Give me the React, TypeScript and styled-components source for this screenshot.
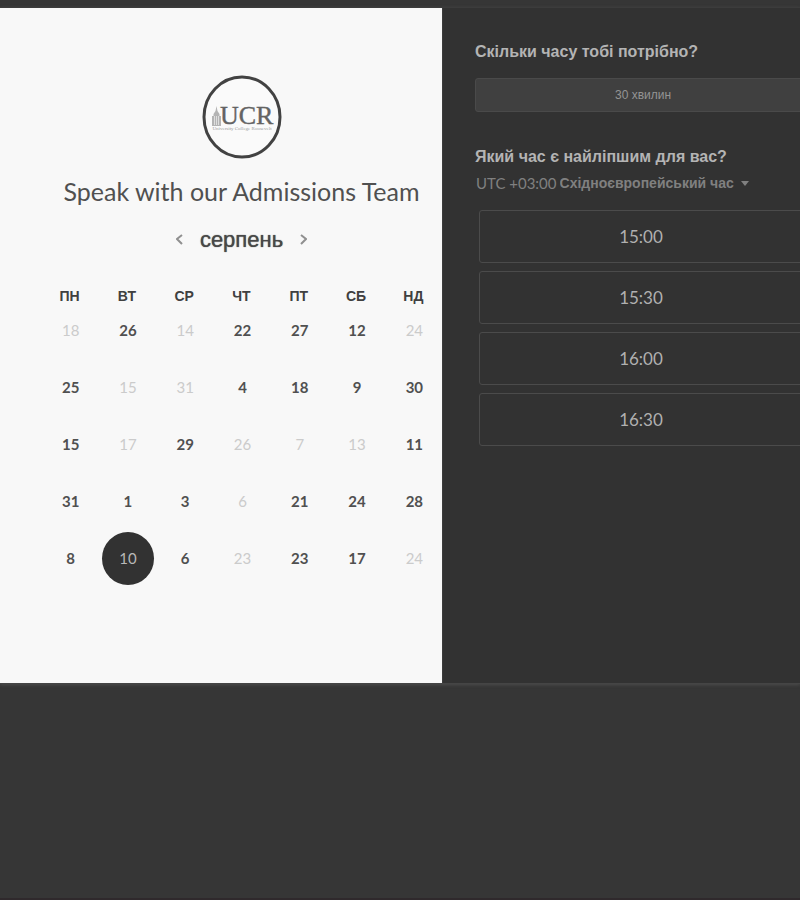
import React, { useState } from "react";
import styled, { createGlobalStyle } from "styled-components";

const latin = `Lato, "Open Sans", sans-serif`;
const cyrillic = `"Liberation Sans", Arial, sans-serif`;

const GlobalStyle = createGlobalStyle`
  *, *::before, *::after { box-sizing: border-box; }
  body { margin: 0; background: #363636; font-family: ${cyrillic}; }
  button, select { font: inherit; color: inherit; margin: 0; padding: 0; border: 0; background: none; cursor: pointer; }
  h1, h2, p { margin: 0; }
`;

const Page = styled.div`
  display: flex;
  flex-direction: column;
  min-height: 100vh;
  padding-top: 7px;
  overflow: hidden;
  background: #363636;
  border-bottom: 2px solid #2f292c;
`;

const Scheduler = styled.main`
  display: flex;
  min-height: 677px;
  border-top: 1px solid #3c3c3c;
  border-bottom: 1px solid #454545;
  box-shadow: 0 1px 3px #4c4c4c;
`;

const CalendarPanel = styled.section`
  flex: 0 0 55.25%;
  display: flex;
  flex-direction: column;
  align-items: center;
  padding: 67px 0 40px 41px;
  background: #f8f8f8;
  color: #444;
`;

const Logo = styled.svg`
  display: block;
  width: 80px;
  height: 84px;
`;

const Title = styled.h1`
  margin-top: 16px;
  font: 400 25px/32px ${latin};
  color: #505050;
  white-space: nowrap;
`;

const MonthBar = styled.div`
  display: flex;
  align-items: center;
  gap: 14px;
  margin-top: 17px;
`;

const Month = styled.h2`
  font: 400 22px/32px ${cyrillic};
  color: #484848;
  text-shadow: 0 0 1px #484848;
`;

const ArrowButton = styled.button`
  display: flex;
  align-items: center;
  justify-content: center;
  width: 12px;
  height: 24px;
  color: #909090;
`;

const Calendar = styled.table`
  width: 100%;
  margin-top: 34px;
  table-layout: fixed;
  border-collapse: collapse;
`;

const Weekday = styled.th`
  height: 12px;
  padding: 0;
  font: 700 14px/12px ${cyrillic};
  color: #404040;
`;

const DayCell = styled.td`
  height: 57px;
  padding: 0 0 0 2px;
  text-align: center;
`;

const DayButton = styled.button<{ $selected: boolean }>`
  width: 52px;
  height: 53px;
  border-radius: 50%;
  font: ${(p) => (p.$selected ? 400 : 700)} 15px/53px ${latin};
  color: ${(p) => (p.$selected ? "#b8b8b8" : "#505050")};
  background: ${(p) => (p.$selected ? "#323232" : "transparent")};

  &:disabled {
    font-weight: 400;
    color: #cbcbcb;
    cursor: default;
  }
`;

const TimePanel = styled.section`
  flex: 1;
  min-width: 0;
  padding: 33px 0 40px 32px;
  border-left: 1px solid #3c3c3c;
  background: #323232;
  color: #b8b8b8;
`;

const Question = styled.h2`
  font: 700 16px/22px ${cyrillic};
  color: #b4b4b4;
`;

const DurationButton = styled.button`
  display: block;
  width: calc(100% + 11px);
  height: 34px;
  margin: 15px 0 34px;
  border: 1px solid #4a4a4a;
  border-radius: 3px;
  background: #404040;
  color: #949494;
  font: 400 12px/16px ${cyrillic};
`;

const Zone = styled.label`
  display: flex;
  align-items: center;
  height: 20px;
  margin-top: 5px;
  padding-left: 1px;
  color: #808080;
`;

const Offset = styled.span`
  margin-right: 3px;
  font: 400 15px/20px ${latin};
  white-space: nowrap;
`;

const ZoneSelect = styled.select`
  appearance: none;
  font: 700 14px/20px ${cyrillic};
  outline-offset: 2px;
`;

const Caret = styled.svg`
  flex: none;
  width: 8px;
  height: 5px;
  margin-left: 6px;
  pointer-events: none;
`;

const Slots = styled.div`
  display: flex;
  flex-direction: column;
  gap: 8px;
  margin: 17px -3px 0 4px;
`;

const SlotButton = styled.button`
  height: 53px;
  border: 1px solid #4b4b4b;
  border-radius: 3px;
  font: 400 17px/24px ${latin};
  color: #b0b0b0;
`;

type Day = { n: number; off?: boolean };
const on = (n: number): Day => ({ n });
const off = (n: number): Day => ({ n, off: true });

const weekdays = ["ПН", "ВТ", "СР", "ЧТ", "ПТ", "СБ", "НД"];
const weeks: Day[][] = [
  [off(18), on(26), off(14), on(22), on(27), on(12), off(24)],
  [on(25), off(15), off(31), on(4), on(18), on(9), on(30)],
  [on(15), off(17), on(29), off(26), off(7), off(13), on(11)],
  [on(31), on(1), on(3), off(6), on(21), on(24), on(28)],
  [on(8), on(10), on(6), off(23), on(23), on(17), off(24)],
];
const slots = ["15:00", "15:30", "16:00", "16:30"];

function UcrLogo() {
  return (
    <Logo viewBox="0 0 80 84" role="img" aria-label="UCR">
      <ellipse cx="40" cy="42" rx="38" ry="40" fill="#fafafa" stroke="#424242" strokeWidth="3" />
      <g fill="#b4b4b4">
        <path d="M14.5 31l1 5 2 3v12h-6V39l2-3z" />
        <path d="M10 41h2v10h-2zM17 41h2v10h-2z" />
      </g>
      <path d="M12.5 41v9M14.5 41v9M16.5 41v9" stroke="#dedede" strokeWidth="1" />
      <text x="18" y="49" fontFamily="Liberation Serif, serif" fontSize="26" fill="#636363" stroke="#636363" strokeWidth="0.4">
        UCR
      </text>
      <text x="40" y="55" textAnchor="middle" fontFamily="Liberation Serif, serif" fontSize="5" fill="#9a9a9a">
        University College Roosevelt
      </text>
    </Logo>
  );
}

function Chevron({ d }: { d: string }) {
  return (
    <svg width="8" height="12" viewBox="0 0 8 12" fill="none" stroke="currentColor" strokeWidth="2" aria-hidden="true">
      <path d={d} />
    </svg>
  );
}

export default function App() {
  const [selected, setSelected] = useState("4-1");

  return (
    <>
      <GlobalStyle />
      <Page>
        <Scheduler>
          <CalendarPanel>
            <UcrLogo />
            <Title>Speak with our Admissions Team</Title>
            <MonthBar>
              <ArrowButton type="button" aria-label="Попередній місяць">
                <Chevron d="M6 1 1 5l5 5" />
              </ArrowButton>
              <Month>серпень</Month>
              <ArrowButton type="button" aria-label="Наступний місяць">
                <Chevron d="M2 1l5 4-5 5" />
              </ArrowButton>
            </MonthBar>
            <Calendar>
              <thead>
                <tr>
                  {weekdays.map((name) => (
                    <Weekday key={name} scope="col">{name}</Weekday>
                  ))}
                </tr>
              </thead>
              <tbody>
                {weeks.map((week, w) => (
                  <tr key={w}>
                    {week.map((day, d) => {
                      const id = `${w}-${d}`;
                      return (
                        <DayCell key={id}>
                          <DayButton
                            type="button"
                            disabled={day.off}
                            $selected={selected === id}
                            aria-pressed={selected === id}
                            onClick={() => setSelected(id)}
                          >
                            {day.n}
                          </DayButton>
                        </DayCell>
                      );
                    })}
                  </tr>
                ))}
              </tbody>
            </Calendar>
          </CalendarPanel>
          <TimePanel>
            <Question>Скільки часу тобі потрібно?</Question>
            <DurationButton type="button">30 хвилин</DurationButton>
            <Question>Який час є найліпшим для вас?</Question>
            <Zone>
              <Offset>UTC +03:00</Offset>
              <ZoneSelect defaultValue="eet">
                <option value="eet">Східноєвропейський час</option>
              </ZoneSelect>
              <Caret viewBox="0 0 8 5" aria-hidden="true">
                <path d="M0 0h8L4 5z" fill="currentColor" />
              </Caret>
            </Zone>
            <Slots>
              {slots.map((time) => (
                <SlotButton key={time} type="button">{time}</SlotButton>
              ))}
            </Slots>
          </TimePanel>
        </Scheduler>
      </Page>
    </>
  );
}
